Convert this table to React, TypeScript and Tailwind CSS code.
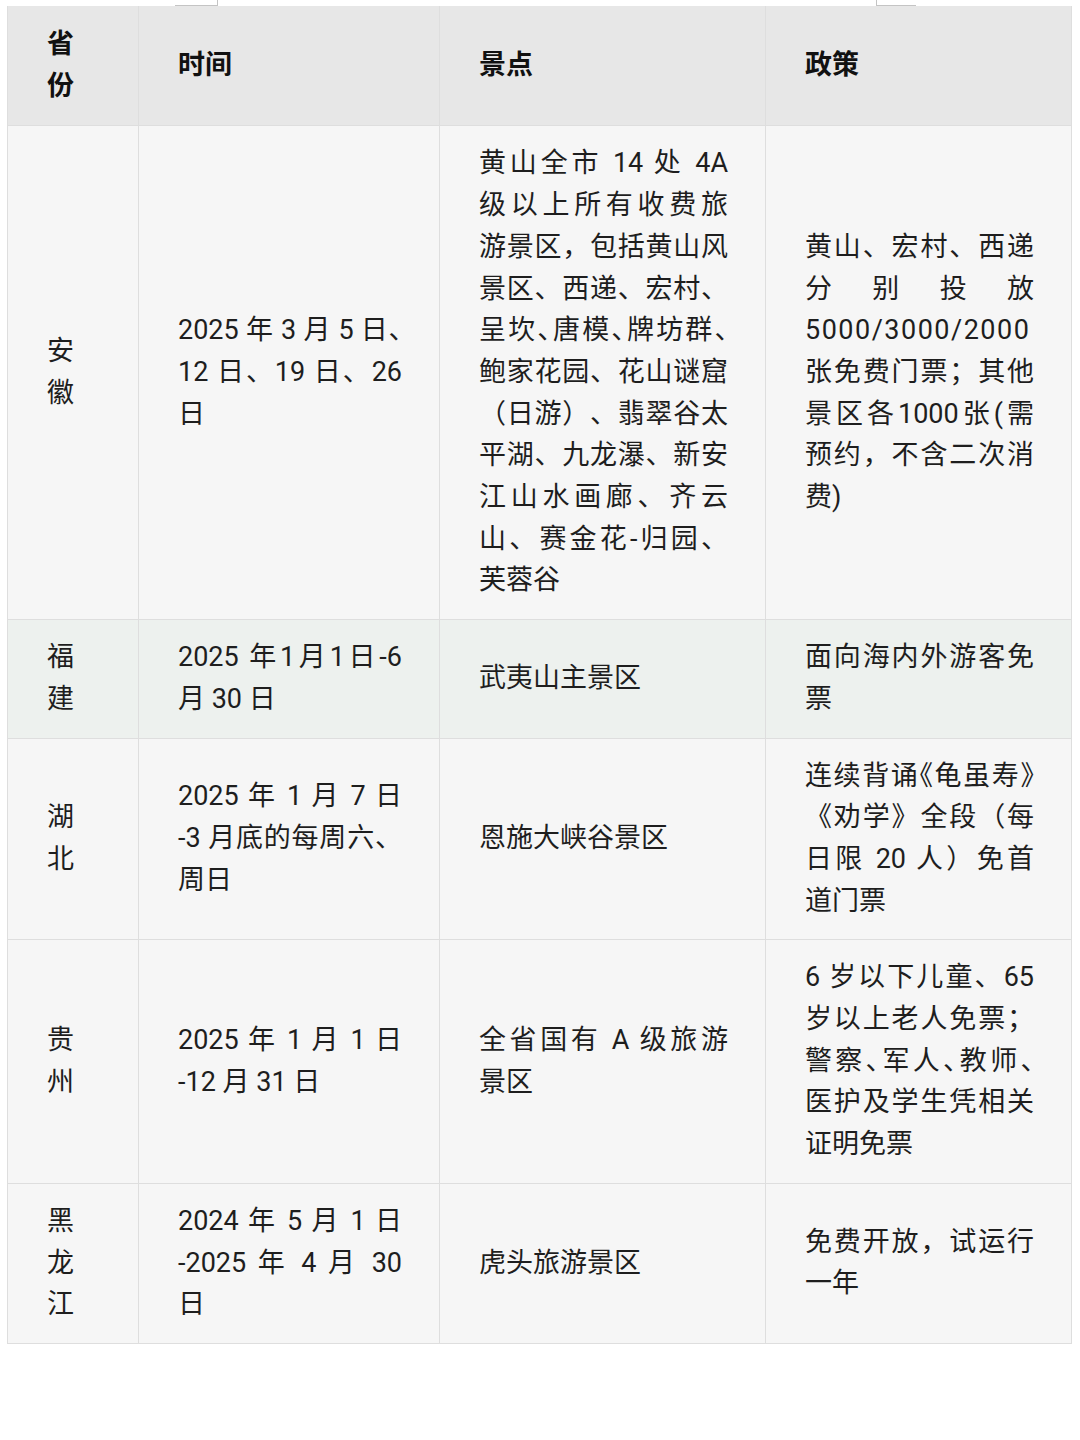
import React from "react";

type Line = string | { t: string; halt?: boolean; wide?: boolean };
type Row = { bg: string; cells: Line[][] };

const header: Line[][] = [["省", "份"], ["时间"], ["景点"], ["政策"]];

const rows: Row[] = [
  {
    bg: "bg-[#f6f6f6]",
    cells: [
      ["安", "徽"],
      [{ t: "2025 年 3 月 5 日、", halt: true }, "12 日、19 日、26", "日"],
      [
        "黄山全市 14 处 4A",
        "级以上所有收费旅",
        "游景区，包括黄山风",
        "景区、西递、宏村、",
        { t: "呈坎、唐模、牌坊群、", halt: true },
        "鲍家花园、花山谜窟",
        "（日游）、翡翠谷太",
        "平湖、九龙瀑、新安",
        "江山水画廊、齐云",
        "山、赛金花-归园、",
        "芙蓉谷",
      ],
      [
        "黄山、宏村、西递",
        "分别投放",
        { t: "5000/3000/2000", wide: true },
        "张免费门票；其他",
        "景区各1000张(需",
        "预约，不含二次消",
        "费)",
      ],
    ],
  },
  {
    bg: "bg-[#edf1ee]",
    cells: [
      ["福", "建"],
      ["2025 年1月1日-6", "月 30 日"],
      ["武夷山主景区"],
      ["面向海内外游客免", "票"],
    ],
  },
  {
    bg: "bg-[#f6f6f6]",
    cells: [
      ["湖", "北"],
      ["2025 年 1 月 7 日", "-3 月底的每周六、", "周日"],
      ["恩施大峡谷景区"],
      [
        { t: "连续背诵《龟虽寿》", halt: true },
        "《劝学》全段（每",
        "日限 20 人）免首",
        "道门票",
      ],
    ],
  },
  {
    bg: "bg-[#f6f6f6]",
    cells: [
      ["贵", "州"],
      ["2025 年 1 月 1 日", "-12 月 31 日"],
      ["全省国有 A 级旅游", "景区"],
      [
        "6 岁以下儿童、65",
        "岁以上老人免票；",
        { t: "警察、军人、教师、", halt: true },
        "医护及学生凭相关",
        "证明免票",
      ],
    ],
  },
  {
    bg: "bg-[#f6f6f6]",
    cells: [
      ["黑", "龙", "江"],
      ["2024 年 5 月 1 日", "-2025 年 4 月 30", "日"],
      ["虎头旅游景区"],
      ["免费开放，试运行", "一年"],
    ],
  },
];

function Cell({ lines, bg, head }: { lines: Line[]; bg: string; head?: boolean }) {
  return (
    <div
      className={`${bg} flex flex-col justify-center border-r border-b border-[#dedede] pl-[39px] pr-[37px] ${
        head ? "py-[18px] font-bold text-[#111]" : "py-[17px] text-[#1e1e1e]"
      }`}
    >
      {lines.map((l, i) => {
        const t = typeof l === "string" ? l : l.t;
        const halt = typeof l !== "string" && l.halt;
        const wide = typeof l !== "string" && l.wide;
        const last = i === lines.length - 1;
        return (
          <div
            key={i}
            className={`${last ? "" : "[text-align-last:justify] text-justify"} ${
              halt ? "[font-feature-settings:'halt']" : ""
            } ${wide ? "tracking-[1.5px]" : ""}`}
          >
            {t}
          </div>
        );
      })}
    </div>
  );
}

export default function App() {
  return (
    <div className="min-h-[1440px] w-[1080px] bg-white font-['Roboto','Noto_Sans_CJK_SC',sans-serif] text-[27px] leading-[41.7px] [text-spacing-trim:space-all]">
      <div className="flex h-[6px]">
        <div className="ml-[175px] w-[43px] border-r border-b border-[#c4c4c4]" />
        <div className="ml-[658px] w-[40px] border-l border-b border-[#c4c4c4]" />
      </div>
      <div className="ml-[7px] grid w-[1065px] grid-cols-[131px_301px_326px_306px] border-l border-[#dedede]">
        {header.map((c, i) => (
          <Cell key={i} lines={c} bg="bg-[#e7e7e7]" head />
        ))}
        {rows.map((r, ri) =>
          r.cells.map((c, ci) => <Cell key={`${ri}-${ci}`} lines={c} bg={r.bg} />)
        )}
      </div>
    </div>
  );
}
